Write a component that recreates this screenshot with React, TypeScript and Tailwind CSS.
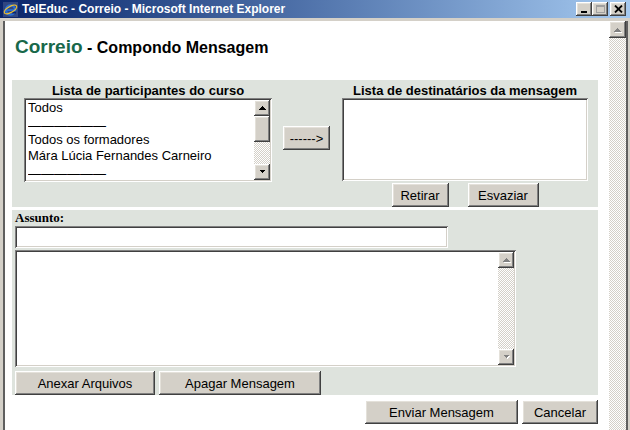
const raised =
  'bg-[#d4d0c8] shadow-[inset_-1px_-1px_#404040,inset_1px_1px_#ffffff,inset_-2px_-2px_#808080,inset_2px_2px_#e4e1da]';
const sunken =
  'bg-white p-[2px] shadow-[inset_1px_1px_#808080,inset_-1px_-1px_#ffffff,inset_2px_2px_#404040,inset_-2px_-2px_#d4d0c8]';
const checker =
  'bg-[repeating-conic-gradient(#d4d0c8_0%_25%,#ffffff_0%_50%)] bg-[length:2px_2px]';

function Arrow({ dir, disabled }: { dir: 'up' | 'down'; disabled?: boolean }) {
  const pts = dir === 'up' ? '0,4 7,4 3.5,0.5' : '0,0 7,0 3.5,3.5';
  return (
    <svg width="9" height="6" viewBox="0 0 9 6" shapeRendering="crispEdges">
      {disabled && <polygon points={pts} fill="#ffffff" transform="translate(1.5,1.5)" />}
      <polygon points={pts} fill={disabled ? '#808080' : '#000000'} transform="translate(0.5,0.5)" />
    </svg>
  );
}

function ScrollButton({ dir, disabled, size = 16 }: { dir: 'up' | 'down'; disabled?: boolean; size?: number }) {
  return (
    <div
      className={`${raised} flex items-center justify-center shrink-0`}
      style={{ width: size, height: size }}
    >
      <Arrow dir={dir} disabled={disabled} />
    </div>
  );
}

function Btn({ label, w }: { label: string; w: string }) {
  return (
    <button className={`${raised} ${w} h-[24px] text-[13px] text-black leading-none flex items-center justify-center`}>
      {label}
    </button>
  );
}

function IeIcon() {
  return (
    <svg width="15" height="15" viewBox="0 0 15 15">
      <rect x="0" y="0" width="15" height="15" fill="#ffffff" opacity="0.15" />
      <circle cx="7.5" cy="8" r="4.6" fill="none" stroke="#2a6fd6" strokeWidth="2.4" />
      <rect x="3.5" y="7.2" width="8" height="1.8" fill="#2a6fd6" />
      <rect x="9" y="9.5" width="4" height="2" fill="#0a246a" />
      <ellipse cx="7.5" cy="7.5" rx="7" ry="3" fill="none" stroke="#f2c230" strokeWidth="1.2" transform="rotate(-30 7.5 7.5)" />
    </svg>
  );
}

function TitleBar() {
  return (
    <div className="h-[18px] flex items-center bg-gradient-to-r from-[#0a246a] to-[#a6caf0] pl-[3px] pr-[4px]">
      <IeIcon />
      <span className="ml-[4px] text-white font-bold text-[12px] leading-none">
        TelEduc - Correio - Microsoft Internet Explorer
      </span>
      <div className="ml-auto flex items-center">
        <div className={`${raised} w-[16px] h-[14px] flex items-end justify-center pb-[3px]`}>
          <div className="w-[6px] h-[2px] bg-black" />
        </div>
        <div className={`${raised} w-[16px] h-[14px] flex items-center justify-center`}>
          <div className="w-[9px] h-[8px] border border-[#a0a0a0] border-t-2" />
        </div>
        <div className={`${raised} ml-[2px] w-[16px] h-[14px] flex items-center justify-center`}>
          <svg width="9" height="8" viewBox="0 0 9 8">
            <path d="M1 0.5 L8 7.5 M8 0.5 L1 7.5" stroke="#000" strokeWidth="1.8" />
          </svg>
        </div>
      </div>
    </div>
  );
}

function Dash() {
  return <div className="h-[16px] pt-[2px] leading-[16px] overflow-hidden">——————</div>;
}

function ParticipantsList() {
  return (
    <div className={`${sunken} h-[84px] flex`}>
      <div className="flex-1 pl-[2px] text-[13px] text-black">
        <div className="h-[16px] leading-[16px]">Todos</div>
        <Dash />
        <div className="h-[16px] leading-[16px]">Todos os formadores</div>
        <div className="h-[16px] leading-[16px]">Mára Lúcia Fernandes Carneiro</div>
        <Dash />
      </div>
      <div className="w-[16px] flex flex-col">
        <ScrollButton dir="up" />
        <div className={`${raised} h-[26px]`} />
        <div className={`flex-1 ${checker}`} />
        <ScrollButton dir="down" />
      </div>
    </div>
  );
}

export default function App() {
  return (
    <div className="w-[630px] h-[430px] overflow-hidden bg-[#d4d0c8] flex flex-col font-['Liberation_Sans',Arial,sans-serif]">
      <TitleBar />
      <div className="flex flex-1 pt-[3px] pl-[3px] pr-[2px] min-h-0">
        <div className="flex flex-1 border-l-2 border-r-2 border-[#5f5f5f] min-h-0">
          <main className="flex-1 bg-white pt-[15px] flex flex-col">
            <div className="h-[22px] leading-[22px] pl-[10px] font-bold whitespace-nowrap">
              <span className="text-[19px] text-[#18684a]">Correio</span>
              <span className="text-[16px] text-black"> - Compondo Mensagem</span>
            </div>

            <section className="mt-[22px] ml-[7px] w-[586px] h-[127px] bg-[#dee3dd] flex pt-[4px] pl-[12px]">
              <div className="w-[248px] flex flex-col">
                <div className="h-[14px] leading-[14px] text-center text-[13px] font-bold text-black whitespace-nowrap">
                  Lista de participantes do curso
                </div>
                <ParticipantsList />
              </div>
              <div className="ml-[11px] mt-[42px]">
                <Btn label="------>" w="w-[47px]" />
              </div>
              <div className="ml-[12px] w-[246px] flex flex-col">
                <div className="h-[14px] leading-[14px] text-center text-[13px] font-bold text-black whitespace-nowrap">
                  Lista de destinatários da mensagem
                </div>
                <div className={`${sunken} h-[83px]`} />
                <div className="mt-[2px] flex justify-center gap-[19px]">
                  <Btn label="Retirar" w="w-[57px]" />
                  <Btn label="Esvaziar" w="w-[71px]" />
                </div>
              </div>
            </section>

            <section className="mt-[3px] ml-[7px] w-[586px] h-[185px] bg-[#dee3dd] pl-[3px] flex flex-col">
              <div className="h-[15px] leading-[15px] text-[13px] font-bold text-black font-['Liberation_Serif','Times_New_Roman',serif]">
                Assunto:
              </div>
              <div className={`${sunken} mt-[1px] w-[433px] h-[22px]`} />
              <div className={`${sunken} mt-[2px] w-[501px] h-[117px] flex`}>
                <div className="flex-1" />
                <div className="w-[16px] flex flex-col">
                  <ScrollButton dir="up" disabled />
                  <div className={`flex-1 ${checker}`} />
                  <ScrollButton dir="down" disabled />
                </div>
              </div>
              <div className="mt-[4px] flex gap-[4px]">
                <Btn label="Anexar Arquivos" w="w-[140px]" />
                <Btn label="Apagar Mensagem" w="w-[162px]" />
              </div>
            </section>

            <div className="mt-[5px] ml-[7px] w-[586px] flex justify-end gap-[4px]">
              <Btn label="Enviar Mensagem" w="w-[153px]" />
              <Btn label="Cancelar" w="w-[76px]" />
            </div>
          </main>
          <aside className="w-[17px] flex flex-col">
            <ScrollButton dir="up" disabled size={17} />
            <div className={`flex-1 ${checker}`} />
          </aside>
        </div>
      </div>
    </div>
  );
}
